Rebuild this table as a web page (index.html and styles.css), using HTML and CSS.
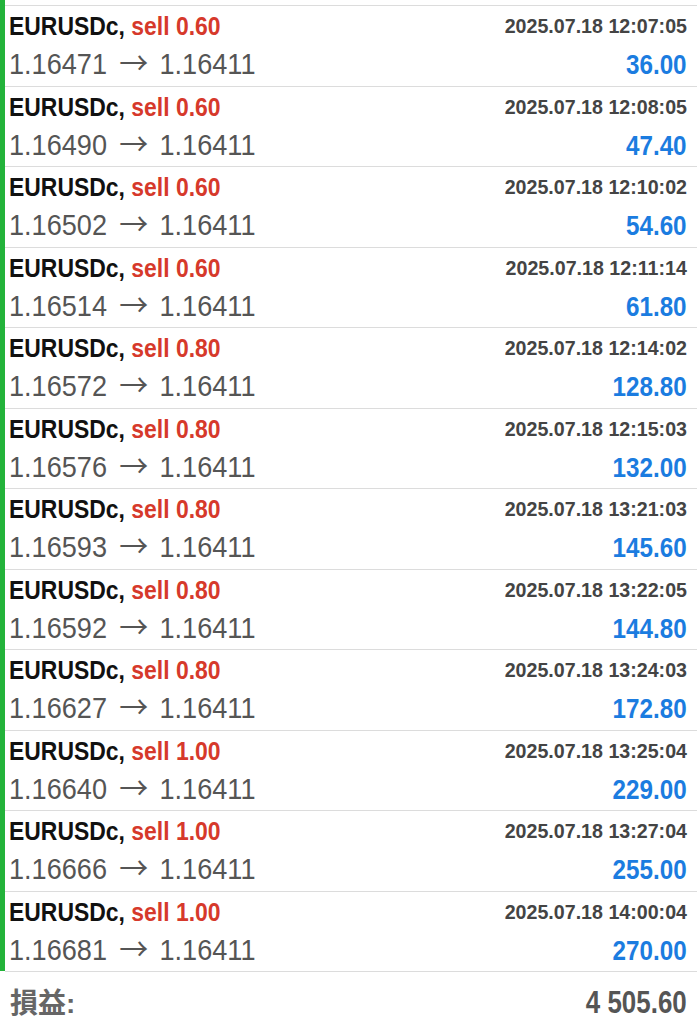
FILE: index.html
```html
<!DOCTYPE html>
<html lang="ja">
<head>
<meta charset="utf-8">
<title>Positions</title>
<link rel="stylesheet" href="styles.css">
</head>
<body>
<div class="list">
  <div class="row"><div class="line1"><span class="sym">EURUSDc, <span class="sell">sell 0.60</span></span><span class="date">2025.07.18 12:07:05</span></div><div class="line2"><span class="price">1.16471 <span class="arrow">→</span> 1.16411</span><span class="profit">36.00</span></div></div>
  <div class="row"><div class="line1"><span class="sym">EURUSDc, <span class="sell">sell 0.60</span></span><span class="date">2025.07.18 12:08:05</span></div><div class="line2"><span class="price">1.16490 <span class="arrow">→</span> 1.16411</span><span class="profit">47.40</span></div></div>
  <div class="row"><div class="line1"><span class="sym">EURUSDc, <span class="sell">sell 0.60</span></span><span class="date">2025.07.18 12:10:02</span></div><div class="line2"><span class="price">1.16502 <span class="arrow">→</span> 1.16411</span><span class="profit">54.60</span></div></div>
  <div class="row"><div class="line1"><span class="sym">EURUSDc, <span class="sell">sell 0.60</span></span><span class="date">2025.07.18 12:11:14</span></div><div class="line2"><span class="price">1.16514 <span class="arrow">→</span> 1.16411</span><span class="profit">61.80</span></div></div>
  <div class="row"><div class="line1"><span class="sym">EURUSDc, <span class="sell">sell 0.80</span></span><span class="date">2025.07.18 12:14:02</span></div><div class="line2"><span class="price">1.16572 <span class="arrow">→</span> 1.16411</span><span class="profit">128.80</span></div></div>
  <div class="row"><div class="line1"><span class="sym">EURUSDc, <span class="sell">sell 0.80</span></span><span class="date">2025.07.18 12:15:03</span></div><div class="line2"><span class="price">1.16576 <span class="arrow">→</span> 1.16411</span><span class="profit">132.00</span></div></div>
  <div class="row"><div class="line1"><span class="sym">EURUSDc, <span class="sell">sell 0.80</span></span><span class="date">2025.07.18 13:21:03</span></div><div class="line2"><span class="price">1.16593 <span class="arrow">→</span> 1.16411</span><span class="profit">145.60</span></div></div>
  <div class="row"><div class="line1"><span class="sym">EURUSDc, <span class="sell">sell 0.80</span></span><span class="date">2025.07.18 13:22:05</span></div><div class="line2"><span class="price">1.16592 <span class="arrow">→</span> 1.16411</span><span class="profit">144.80</span></div></div>
  <div class="row"><div class="line1"><span class="sym">EURUSDc, <span class="sell">sell 0.80</span></span><span class="date">2025.07.18 13:24:03</span></div><div class="line2"><span class="price">1.16627 <span class="arrow">→</span> 1.16411</span><span class="profit">172.80</span></div></div>
  <div class="row"><div class="line1"><span class="sym">EURUSDc, <span class="sell">sell 1.00</span></span><span class="date">2025.07.18 13:25:04</span></div><div class="line2"><span class="price">1.16640 <span class="arrow">→</span> 1.16411</span><span class="profit">229.00</span></div></div>
  <div class="row"><div class="line1"><span class="sym">EURUSDc, <span class="sell">sell 1.00</span></span><span class="date">2025.07.18 13:27:04</span></div><div class="line2"><span class="price">1.16666 <span class="arrow">→</span> 1.16411</span><span class="profit">255.00</span></div></div>
  <div class="row"><div class="line1"><span class="sym">EURUSDc, <span class="sell">sell 1.00</span></span><span class="date">2025.07.18 14:00:04</span></div><div class="line2"><span class="price">1.16681 <span class="arrow">→</span> 1.16411</span><span class="profit">270.00</span></div></div>
</div>
<div class="footer"><span class="label">損益:</span><span class="total">4 505.60</span></div>
</body>
</html>
```

FILE: styles.css
```css
html, body {
  margin: 0;
  padding: 0;
  background: #ffffff;
}
body {
  font-family: "Liberation Sans", "Noto Sans CJK JP", sans-serif;
  width: 697px;
}
.list {
  border-left: 5px solid #23b33a;
  padding-top: 5px;
}
.row {
  box-sizing: border-box;
  height: 80.5px;
  border-top: 1px solid #dcdcdc;
  padding: 6px 10px 0 4px;
}
.line1 {
  display: flex;
  justify-content: space-between;
  align-items: center;
  height: 28px;
}
.sym {
  display: inline-block;
  font-weight: bold;
  font-size: 26.5px;
  line-height: 28px;
  color: #111111;
  white-space: nowrap;
  transform: scaleX(0.865);
  transform-origin: left center;
}
.sell {
  color: #d6392b;
}
.date {
  display: inline-block;
  font-weight: bold;
  font-size: 21px;
  line-height: 28px;
  color: #444444;
  white-space: nowrap;
  transform: scaleX(0.935);
  transform-origin: right center;
}
.line2 {
  display: flex;
  justify-content: space-between;
  align-items: baseline;
  margin-top: 7px;
  line-height: 34px;
}
.price {
  display: inline-block;
  font-size: 29px;
  color: #555555;
  white-space: nowrap;
  transform: scaleX(0.935);
  transform-origin: left center;
}
.arrow {
  font-family: "Noto Sans CJK JP", sans-serif;
  font-weight: 400;
  font-size: 31px;
  line-height: 20px;
  margin: 0 4px 0 5px;
  color: #555555;
}
.profit {
  display: inline-block;
  font-weight: bold;
  font-size: 27px;
  color: #1b7ce0;
  white-space: nowrap;
  transform: scaleX(0.896);
  transform-origin: right center;
}
.footer {
  margin-left: 5px;
  border-top: 1px solid #dcdcdc;
  padding: 10px 10px 0 5px;
  display: flex;
  justify-content: space-between;
  align-items: baseline;
  line-height: 40px;
}
.label {
  font-weight: bold;
  font-size: 28px;
  color: #666666;
}
.total {
  display: inline-block;
  font-weight: bold;
  font-size: 30.5px;
  color: #555555;
  white-space: nowrap;
  transform: scaleX(0.85);
  transform-origin: right center;
}
```
